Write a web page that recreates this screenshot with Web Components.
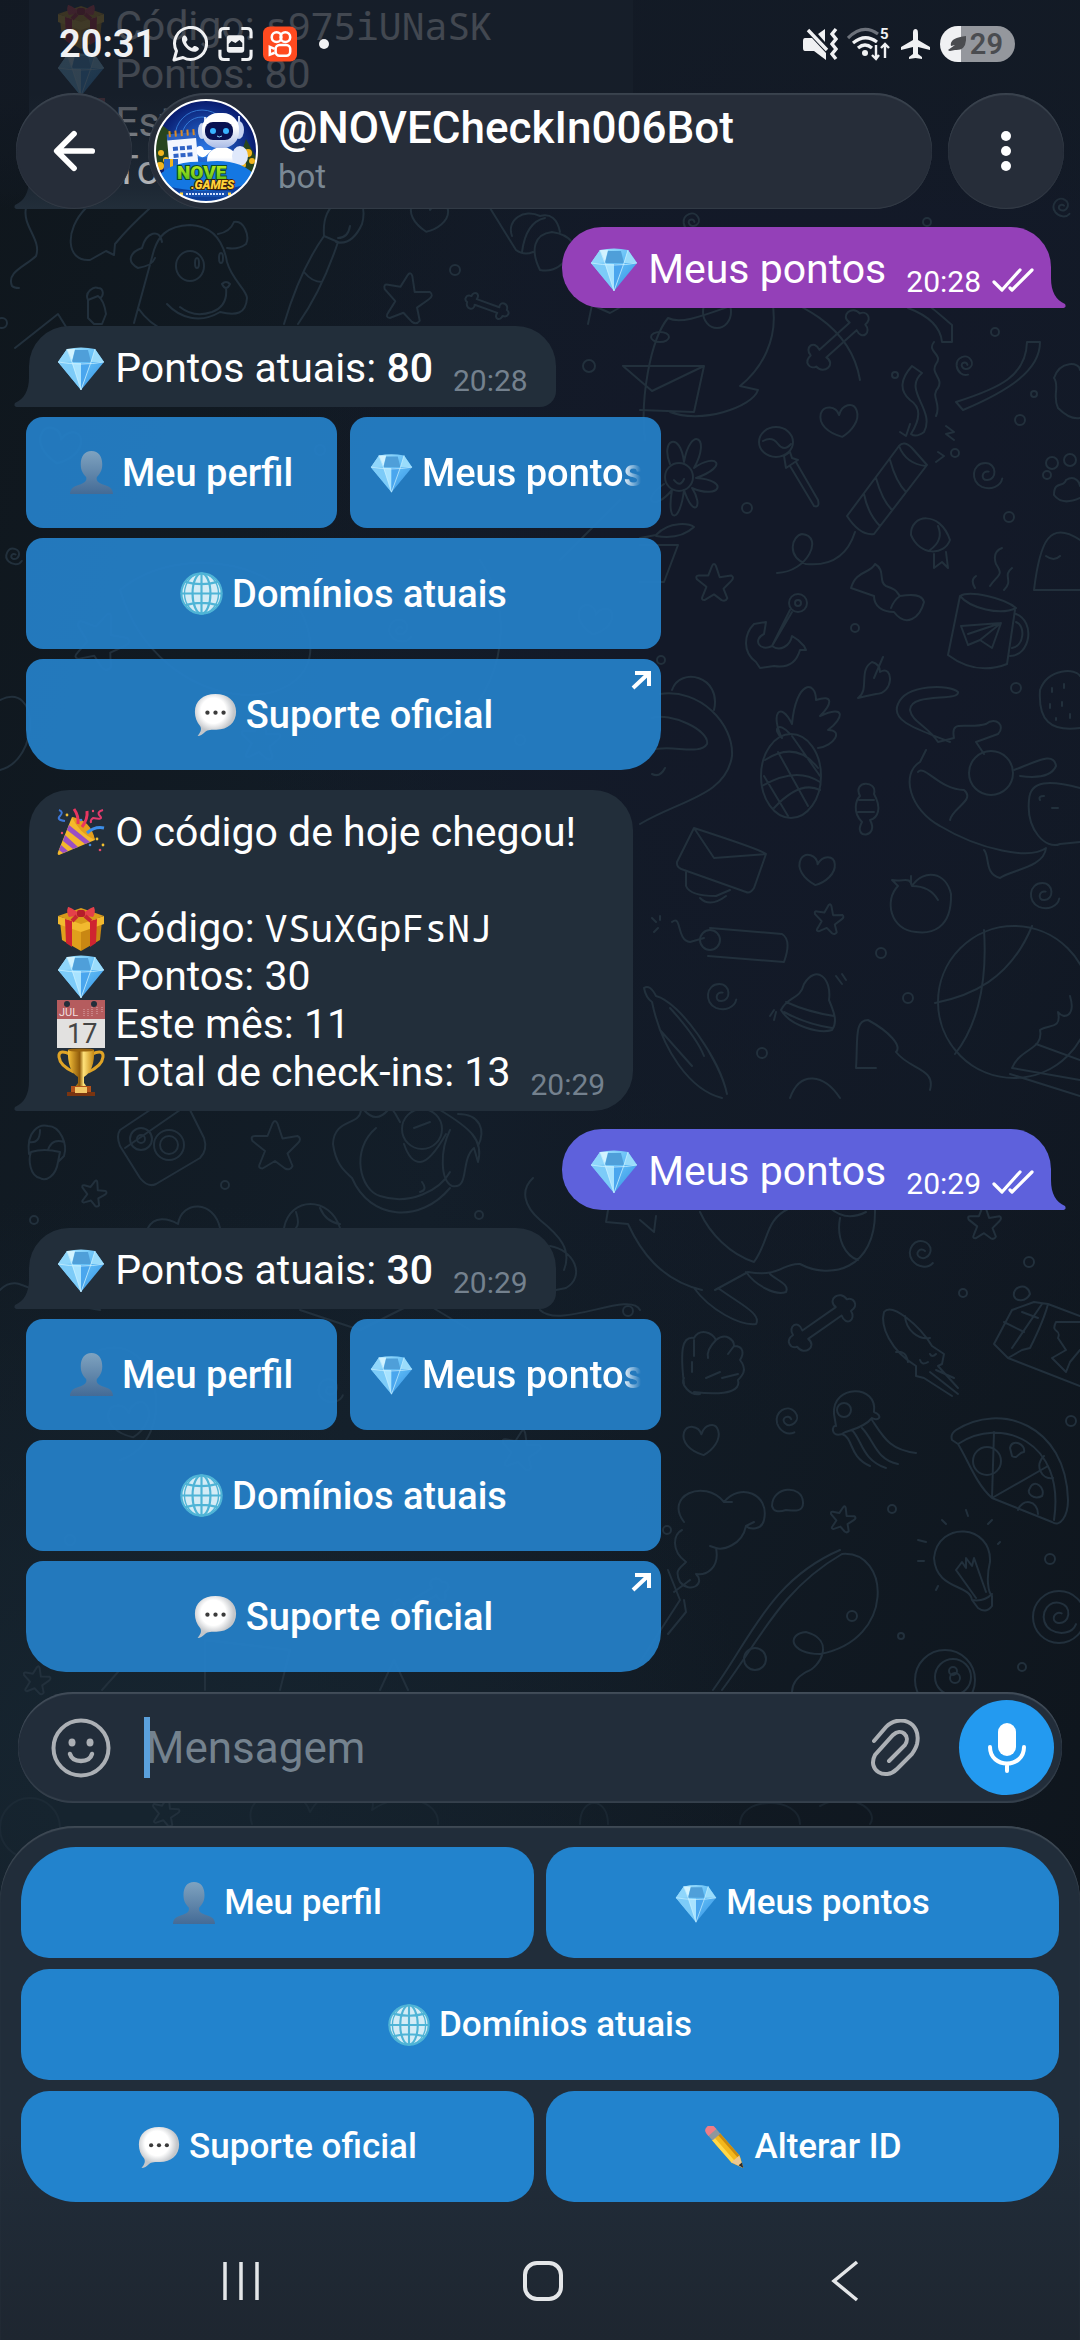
<!DOCTYPE html>
<html lang="pt-BR">
<head>
<meta charset="utf-8">
<meta name="viewport" content="width=device-width, initial-scale=1">
<title>@NOVECheckIn006Bot</title>
<style>
  body {
    margin: 0;
    background: #121924;
    color: #fff;
    font-family: Roboto, "Noto Sans", sans-serif;
  }
</style>
</head>
<body>
<chat-screen>
  <chat-wallpaper slot="wallpaper"></chat-wallpaper>
  <status-bar slot="top"></status-bar>
  <chat-header slot="top" name="@NOVECheckIn006Bot" status="bot"></chat-header>

  <chat-bubble time="20:28">
    <br>
    <emoji-icon name="gift"></emoji-icon> Código: <code>s975iUNaSK</code><br>
    <emoji-icon name="diamond"></emoji-icon> Pontos: 80<br>
    <emoji-icon name="calendar"></emoji-icon> Este mês: 10<br>
    <emoji-icon name="trophy"></emoji-icon> Total de check-ins: 12</chat-bubble>
  <chat-bubble out time="20:28"><emoji-icon name="diamond"></emoji-icon> Meus pontos</chat-bubble>
  <chat-bubble keyed time="20:28"><emoji-icon name="diamond"></emoji-icon> Pontos atuais: <b>80</b></chat-bubble>
  <inline-keyboard></inline-keyboard>

  <chat-bubble time="20:29">
    <emoji-icon name="party"></emoji-icon> O código de hoje chegou!<br>
    <br>
    <emoji-icon name="gift"></emoji-icon> Código: <code>VSuXGpFsNJ</code><br>
    <emoji-icon name="diamond"></emoji-icon> Pontos: 30<br>
    <emoji-icon name="calendar"></emoji-icon> Este mês: 11<br>
    <emoji-icon name="trophy"></emoji-icon> Total de check-ins: 13</chat-bubble>
  <chat-bubble out late time="20:29"><emoji-icon name="diamond"></emoji-icon> Meus pontos</chat-bubble>
  <chat-bubble keyed time="20:29"><emoji-icon name="diamond"></emoji-icon> Pontos atuais: <b>30</b></chat-bubble>
  <inline-keyboard></inline-keyboard>

  <message-composer slot="bottom"></message-composer>
  <reply-keyboard slot="bottom"></reply-keyboard>
</chat-screen>

<script>
const EMOJI = {
  diamond: `
    <linearGradient id="d" x1="0" y1="0" x2="1" y2="1"><stop offset="0" stop-color="#b6ecff"/><stop offset=".5" stop-color="#5fbcf6"/><stop offset="1" stop-color="#2f8be0"/></linearGradient>
    <path d="M10 5Q24 2 38 5L47 18 24 46 1 18Z" fill="url(#d)"/>
    <path d="M1 18 10 5 15 17Z" fill="#8fd6fb"/><path d="M10 5H18L15 17Z" fill="#d2f3ff"/>
    <path d="M18 6H31L34 18H15Z" fill="#4f9fd9"/><path d="M38 5 34 18 47 18Z" fill="#9adcfb"/>
    <path d="M1 18 15 19 24 46Z" fill="#7ccbf8"/><path d="M15 19H24V46Z" fill="#a8e3ff"/><path d="M24 19H34L24 46Z" fill="#4aa6ee"/>
    <path d="M1 18Q24 22 47 18M15 18 10 5M34 18 38 5M15 18 24 46 34 18" fill="none" stroke="#c9f0ff" stroke-width=".8"/>`,
  gift: `
    <path d="M3 17 24 24V47L5 36Z" fill="#e0a01c"/><path d="M45 17 24 24V47L43 36Z" fill="#c98712"/>
    <path d="M1 12 24 19 47 12V20L24 28 1 20Z" fill="#f2b92f"/><path d="M1 12 24 4 47 12 24 20Z" fill="#d99a1a"/>
    <path d="M8 15 15 17V43L9 39ZM40 15 33 17V43L39 39Z" fill="#cf2430"/>
    <path d="M22 9Q12 2 11 3Q9 8 12 13Q18 13 23 10ZM26 9Q36 2 37 3Q39 8 36 13Q30 13 25 10Z" fill="#e4404a"/>
    <rect x="20" y="6" width="8" height="7" rx="2" fill="#b51d2a"/><path d="M20 12 15 17M28 12 34 17" stroke="#c82632" stroke-width="4"/>`,
  party: `
    <path d="M15 9Q32 14 38 32L2 47Q0 47 1 44Z" fill="#f5b92c"/>
    <path d="M12 17 33 34 28 36 10 22ZM8 27 21 39 16 41 6 33ZM4 37 11 43 6 45 2 42Z" fill="#9a4fc4"/>
    <path d="M15 9Q34 12 38 32Q22 25 15 9Z" fill="#e39d1c"/>
    <path d="M21 16Q22 8 17 1M25 19Q31 11 30 3" stroke="#e8365f" stroke-width="3" fill="none"/>
    <path d="M30 25Q38 18 47 20" stroke="#3c8ee8" stroke-width="3" fill="none"/>
    <path d="M2 2Q7 4 3 8T8 13" stroke="#3c78d8" stroke-width="2" fill="none"/><path d="M46 2Q39 4 43 8T36 10Q33 12 34 15" stroke="#e23b6c" stroke-width="2" fill="none"/>
    <g fill="#f4c02f"><circle cx="10" cy="7" r="1.4"/><circle cx="40" cy="31" r="1.4"/><circle cx="46" cy="37" r="1.4"/></g>
    <g fill="#e8476a"><circle cx="36" cy="3" r="1.2"/><circle cx="43" cy="42" r="1.3"/><circle cx="5" cy="25" r="1.2"/></g>
    <g fill="#3f87e0"><circle cx="24" cy="12" r="1.3"/><circle cx="33" cy="37" r="1.3"/></g>`,
  calendar: `
    <rect width="48" height="48" fill="#e2e1e0"/><rect width="48" height="19" fill="#b55c5e"/>
    <circle cx="10" cy="4" r="3" fill="#222e3a"/><circle cx="37" cy="4" r="3" fill="#222e3a"/>
    <path d="M27 9V16M31 9V16M35 7V16M40 7V14M45 7V13" stroke="#c98486" stroke-width="2" stroke-dasharray="1 1"/>
    <text x="2" y="16" font-size="11" fill="#f2dede">JUL</text><text x="10" y="43" font-size="27" fill="#454545">17</text>`,
  trophy: `
    <linearGradient id="t"><stop offset="0" stop-color="#f7c23a"/><stop offset=".45" stop-color="#8f5a0a"/><stop offset=".6" stop-color="#ffe27a"/><stop offset="1" stop-color="#c48713"/></linearGradient>
    <path d="M13 6Q1 1 2 9Q3 18 17 24M35 6Q47 1 46 9Q45 18 31 24" fill="none" stroke="#e0a426" stroke-width="3"/>
    <path d="M11 2H37Q38 22 27 29V35L30 39H18L21 35V29Q10 22 11 2Z" fill="url(#t)"/><ellipse cx="24" cy="2" rx="13" ry="1.6" fill="#9a650e"/>
    <path d="M14 38H34V46H14Z" fill="#b3521a"/><path d="M10 44H38V48H10Z" fill="#7a3410"/><rect x="18" y="39" width="12" height="6" fill="#f3c767"/>`,
  user: `
    <linearGradient id="u" x2="0" y2="1"><stop offset="0" stop-color="#7fa3c0"/><stop offset="1" stop-color="#446b96"/></linearGradient>
    <path d="M24 0C32 0 36 6 36 15C36 22 33 26 30 29C29 33 31 35 36 37C43 39 48 41 48 48H0C0 41 5 39 12 37C17 35 19 33 18 29C15 26 12 22 12 15C12 6 16 0 24 0Z" fill="url(#u)"/>`,
  globe: `
    <circle cx="24" cy="24" r="23" fill="#d3ecf6"/>
    <g fill="none" stroke="#4fb4d6" stroke-width="2.4"><circle cx="24" cy="24" r="22.5"/><ellipse cx="24" cy="24" rx="10" ry="22.5"/><ellipse cx="24" cy="24" rx="19" ry="22.5" stroke-width="1.5"/><path d="M24 1V47M1 24H47M6 11Q24 16 42 11M6 37Q24 32 42 37"/></g>`,
  speech: `
    <radialGradient id="s" cx=".45" cy=".4"><stop offset=".6" stop-color="#fff"/><stop offset="1" stop-color="#c3c6ca"/></radialGradient>
    <path d="M24 1C38 1 47 9 47 21C47 33 38 41 25 41C20 41 15 41 13 43C10 46 7 48 4 48C7 44 9 41 7 37C3 33 1 27 1 21C1 9 10 1 24 1Z" fill="url(#s)"/>
    <g fill="#3b3b3b"><circle cx="15" cy="22" r="2.4"/><circle cx="24" cy="22" r="2.4"/><circle cx="33" cy="22" r="2.4"/></g>`,
  pencil: `
    <g transform="rotate(-41 24 24)"><path d="M18 8H30V43L24 56 18 43Z" fill="#f4b81c"/><path d="M18 8H22V43H18Z" fill="#ffd84a"/><path d="M27 8H30V43H27Z" fill="#c98a10"/>
    <path d="M18 42H30L24 56Z" fill="#ecc793"/><path d="M22 50H27L24 56Z" fill="#2c2c2c"/><path d="M18 1H30V9H18Z" fill="#8f979d"/><path d="M18-1Q18-7 24-7T30-1V2H18Z" fill="#ef7d86"/></g>`
};

class EmojiIcon extends HTMLElement {
  connectedCallback() {
    this.attachShadow({ mode: "open" });
    this.shadowRoot.innerHTML = `
      <style>
        :host {
          display: inline-block;
          width: var(--emoji-size, 48px);
          height: var(--emoji-size, 48px);
          flex: none;
          vertical-align: top;
        }
        svg { display: block; width: 100%; height: 100%; overflow: visible; }
      </style>
      <svg viewBox="0 0 48 48" aria-hidden="true">${EMOJI[this.getAttribute("name")]}</svg>
    `;
  }
}

// Small doodles repeated over the wallpaper: [symbol, x, y, scale, rotation]
const DOODLES = [
  ["star", 406, 298, 25, 10], ["star", 275, 1146, 25, 0], ["star", 93, 1193, 13, 15], ["star", 714, 583, 19, 0],
  ["star", 828, 919, 15, 8], ["star", 984, 1223, 17, 0], ["star", 842, 1519, 13, 12], ["star", 36, 1680, 14, 10], ["star", 165, 1812, 14, 12],
  ["heart", 429, 216, 20, 10], ["heart", 840, 421, 20, -8], ["heart", 817, 870, 19, 6], ["heart", 702, 1440, 19, -6],
  ["swirl", 987, 475, 17, 0], ["swirl", 965, 365, 11, 60], ["swirl", 1044, 895, 17, 0], ["swirl", 721, 996, 17, 0],
  ["swirl", 922, 1253, 16, 30], ["swirl", 788, 1420, 15, 50], ["swirl", 1059, 1617, 20, 10], ["swirl", 1062, 207, 11, 30],
  ["swirl", 14, 556, 10, 20], ["swirl", 692, 222, 11, 60],
  ["bone", 838, 340, 34, -42], ["bone", 822, 1323, 34, -35], ["bone", 487, 306, 20, 20],
  ["dot", 455, 270, 5], ["dot", 2, 323, 5], ["dot", 589, 366, 6], ["dot", 895, 375, 3], ["dot", 995, 332, 4], ["dot", 1034, 394, 3],
  ["dot", 1020, 420, 5], ["dot", 955, 453, 4], ["dot", 747, 508, 5], ["dot", 1009, 517, 5], ["dot", 855, 628, 4], ["dot", 1016, 688, 5],
  ["dot", 881, 953, 5], ["dot", 908, 998, 5], ["dot", 762, 1053, 5], ["dot", 225, 1185, 4], ["dot", 479, 1215, 4], ["dot", 34, 1220, 4],
  ["dot", 628, 1311, 5], ["dot", 1029, 1262, 5], ["dot", 963, 1293, 4], ["dot", 1071, 1421, 5], ["dot", 892, 1509, 4], ["dot", 667, 1530, 4],
  ["dot", 852, 1616, 5], ["dot", 1050, 1559, 5], ["dot", 901, 1636, 3], ["dot", 1022, 1667, 4], ["dot", 927, 222, 4], ["dot", 661, 660, 4],
  ["star", 100, 640, 28, 20], ["heart", 60, 446, 22, 10], ["dot", 320, 450, 5], ["swirl", 400, 630, 14, 20], ["heart", 595, 620, 18, 10],
  ["star", 260, 740, 20, 5], ["dot", 520, 740, 5], ["heart", 130, 1420, 22, -10], ["swirl", 330, 1390, 15, 10], ["star", 520, 1450, 20, 10],
  ["dot", 70, 1540, 5], ["bone", 420, 1600, 28, -30]
];

class ChatWallpaper extends HTMLElement {
  connectedCallback() {
    this.attachShadow({ mode: "open" });
    const uses = DOODLES.map(([id, x, y, s, r = 0]) =>
      `<use href="#${id}" transform="translate(${x} ${y}) rotate(${r}) scale(${s / 10})"/>`).join("");
    this.shadowRoot.innerHTML = `
      <style>
        :host {
          position: absolute;
          inset: 0;
          background:
            radial-gradient(ellipse 55% 40% at 75% 22%, #131928 30%, transparent),
            radial-gradient(ellipse 60% 25% at 10% 76%, #16242f 10%, transparent),
            linear-gradient(110deg, #0f161c 0%, #131e29 45%, #0e141b 100%);
        }
        svg { display: block; width: 100%; height: 100%; }
        use, path, circle, ellipse { vector-effect: non-scaling-stroke; }
      </style>
      <svg viewBox="0 0 1080 2340" preserveAspectRatio="xMidYMin slice" fill="none" stroke="#22303c" stroke-width="2" stroke-linecap="round" stroke-linejoin="round" aria-hidden="true">
        <defs>
          <path id="star" d="M-1-9Q0-11 1-9L3-3 9-4Q11-3 9-1L5 3 7 8Q6 10 4 9L0 6-5 9Q-7 9-6 7L-4 2-9-2Q-10-4-8-4L-3-4Z"/>
          <path id="heart" d="M0 8C-7 5-11 0-9-5C-7-9-1-8 0-3C2-8 8-9 9-4C10 1 5 6 0 8Z"/>
          <path id="swirl" d="M1-2C-3-3-4 3 0 3C6 3 6-7-1-7C-9-7-10 4-3 7C2 9 8 7 9 2"/>
          <path id="bone" d="M-6-1.5H6C5-5 10-5 10-1.500C12-1 12 2 9 2C9 5 5 5 6 1.500H-6C-5 5-10 5-10 1.500C-12 1-12-2-9-2C-9-5-5-5-6-1.500Z"/>
          <circle id="dot" r="10"/>
        </defs>
        ${uses}
        <!-- dog, brush, croissant and cactus under the header -->
        <path d="M134 323 154 250C158 238 165 226 190 225C216 226 224 245 227 262C232 280 247 290 247 298C246 314 236 316 220 312C200 324 180 318 167 304M180 307C190 315 200 316 212 312Q228 306 226 288M222 284Q226 280 230 284 226 292 222 284M162 242C160 228 146 232 142 248C130 252 126 262 138 268Q152 266 155 258M218 234Q230 232 234 222C244 220 250 236 246 244Q238 250 227 248M138 308Q150 325 165 330"/>
        <ellipse cx="190" cy="266" rx="14" ry="15"/><ellipse cx="197" cy="263" rx="2" ry="5"/><ellipse cx="221" cy="258" rx="2" ry="5"/>
        <path d="M284 324Q300 270 324 236L338 242Q322 290 298 324M304 272Q312 282 322 282M324 236C322 210 334 205 345 190C362 190 366 210 362 224Q352 246 336 242M350 226Q348 238 338 238"/>
        <path d="M490 208 516 250Q524 256 533 252M512 236C506 220 524 208 540 216Q556 212 560 232M522 252Q526 222 545 218M540 270C530 250 534 234 552 232Q566 234 572 242M540 270Q560 274 572 250"/>
        <path d="M26 208C22 226 42 240 36 256C26 266 6 272 12 286Q14 288 19 288M86 208C64 230 66 262 90 260L106 251 114 255 115 244Q128 228 150 208M88 300C84 292 94 286 98 288C104 288 104 296 100 298M88 300V318L94 324H102L106 314Q104 300 98 296ZM15 348 58 314 68 330"/>
        <path d="M588 324 592 305 610 313 628 303M645 440C640 400 650 340 668 318M668 318C690 330 750 290 772 300C780 340 760 370 740 386L758 390C752 408 700 424 670 412M623 366H704L694 412 640 410M623 366 652 391 704 366"/>
        <ellipse cx="717" cy="312" rx="14" ry="16"/><ellipse cx="660" cy="337" rx="9" ry="5"/>
        <path d="M750 285C790 300 850 320 860 380M905 290C930 304 940 315 952 325V342H942Q940 320 908 308M912 366 922 373C902 390 936 410 924 432Q916 438 911 434 926 410 910 400 894 386 912 366ZM934 342C926 352 944 354 936 364 930 374 944 378 938 388 930 396 942 404 936 416M1027 342H1040C1040 370 1010 390 963 410L956 402C1000 388 1026 376 1027 342Z"/>
        <!-- lollipop, daisy pot and party cracker -->
        <ellipse cx="776" cy="442" rx="17" ry="15"/><path d="M763 441Q772 436 778 444T791 444M784 456 790 452 792 458 798 460 792 464 786 468ZM790 466 814 506Q820 508 818 500L796 462"/>
        <ellipse cx="679" cy="477" rx="14" ry="14"/><path d="M670 464C660 440 680 430 684 462C690 426 712 436 694 468C716 452 730 466 696 478C730 480 720 500 692 488C704 506 694 520 684 490C680 524 666 524 672 490C654 512 640 500 664 484M674 480Q680 488 684 479M640 538 656 535C670 520 690 524 694 527Q680 540 656 536M640 545H678L664 582H640"/>
        <path d="M847 516 899 446Q904 440 912 448L927 465 874 534Q860 536 847 516ZM899 446Q906 464 926 466M864 494Q868 514 880 526M876 478Q882 500 892 510M890 460Q896 482 906 492M855 532C846 560 826 566 806 564C786 556 792 536 802 534C824 536 808 572 777 573"/>
        <path d="M900 432 906 436 910 424M946 426 954 432 946 434 954 440M936 462 944 456 938 452M1054 378C1060 360 1080 362 1080 370M1054 378C1060 386 1052 396 1058 408Q1070 420 1080 418"/>
        <path d="M1054 495C1054 480 1064 488 1066 480C1076 474 1080 484 1080 486M1054 495Q1062 506 1080 498"/><circle cx="1052" cy="463" r="6"/><circle cx="1070" cy="460" r="6"/><circle cx="1047" cy="475" r="4"/>
        <path d="M911 535C910 514 940 510 950 540C944 556 920 556 911 535ZM934 554 934 568 942 562 948 568 946 552M938 526Q944 540 930 550"/>
        <path d="M851 588C856 570 870 574 875 564C886 570 878 582 886 586C898 590 896 592 900 596C912 594 922 594 924 602C920 618 906 628 894 612C882 612 874 606 874 596ZM891 608Q894 600 900 596"/>
        <!-- anchor, mug and leaf -->
        <path d="M792 612 772 646C780 652 790 646 792 636L798 640 804 646 806 650H800C796 664 786 668 774 666L760 668 756 662C742 652 744 634 754 624L766 622 764 634C752 640 760 652 772 646L790 610"/><circle cx="798" cy="603" r="9"/><circle cx="798" cy="603" r="3"/>
        <path d="M960 596 948 655Q976 676 1007 664L1015 610M960 596C970 590 1004 598 1016 608C1000 616 970 608 960 596ZM1016 614C1036 622 1030 656 1010 656M1016 622C1026 626 1024 646 1012 648M961 626 1001 623 992 648 980 640 968 645ZM968 634 1001 623 980 640M975 588Q970 580 976 576M990 586C998 574 1004 576 996 564Q992 552 1002 548M1004 590C1014 580 1002 576 1012 568"/>
        <path d="M858 698C870 690 858 670 872 662Q880 664 880 672C894 664 894 694 876 694Q866 696 858 698M883 657 874 678M1034 590C1040 540 1050 520 1080 540M1034 590H1080M1046 556Q1054 562 1060 556"/>
        <path d="M1040 690C1048 668 1076 668 1080 676M1040 690C1038 720 1050 732 1080 728M1052 688V692M1064 684V688M1050 704V708M1062 702V706M1070 714V718M1056 718V720"/>
        <!-- pineapple, candy, panda and sleeping cat -->
        <ellipse cx="791" cy="776" rx="30" ry="42"/><path d="M782 738C770 714 780 700 792 724C796 680 816 680 816 700C834 694 832 704 820 716C846 704 844 718 828 730C844 730 834 746 818 748M782 738C772 730 778 720 790 734M765 760Q796 740 818 768M762 786Q796 766 820 782M774 808Q800 780 820 790M778 752 808 806M792 736 820 776M764 776 788 816"/>
        <path d="M860 796C852 780 878 780 874 794C882 808 878 818 870 820C880 838 852 840 862 822C852 812 856 800 860 796ZM859 800H874M858 812H874"/>
        <path d="M672 690C680 666 722 676 714 710M660 694C700 688 734 724 732 756C726 796 680 800 640 824M652 718C670 712 710 730 707 744C700 756 670 744 652 750M652 774Q660 778 665 768"/>
        <path d="M950 742C920 730 890 722 898 704C906 684 950 684 958 692C960 702 910 692 910 710C912 722 928 726 938 742L954 738C950 718 966 730 986 724C996 716 1006 726 998 734L976 742 984 754M926 750 920 762C900 774 910 810 940 826C980 850 1030 860 1046 848C1044 868 1010 870 1000 878C984 874 990 856 984 850M918 772C924 764 940 790 964 790C976 800 952 808 950 820M1029 800C1030 780 1050 780 1080 788M1029 800C1026 830 1046 850 1060 844L1080 842M1014 770C1040 760 1054 752 1056 766Q1050 780 1020 776M1040 800Q1038 796 1044 796M1052 808H1058"/>
        <ellipse cx="991" cy="773" rx="22" ry="22"/>
        <path d="M694 828 677 862Q676 868 684 870L746 892Q750 894 754 888L766 854Q762 850 694 828ZM694 828 714 858 766 854M686 872V886Q690 896 716 896L730 890M700 898Q710 908 726 896"/>
        <!-- dynamite, bell, peach, ball, boat -->
        <path d="M710 928 782 934Q792 940 784 962L708 956M672 922C682 914 676 940 690 942L704 938M652 918 656 922M660 916V920M654 932 658 928"/><circle cx="710" cy="940" r="10"/>
        <path d="M892 880C904 882 910 876 912 886C924 868 946 872 951 894C952 930 930 934 916 932C890 930 884 900 898 886ZM912 886Q930 886 938 900M911 876V884"/>
        <path d="M781 1010C788 996 800 1000 804 984C816 964 832 978 829 1000C834 1012 838 1022 832 1030C820 1034 790 1026 781 1010ZM786 1002Q808 1012 834 1016M784 1012Q806 1024 832 1028M836 976 842 984M842 974 846 980M770 1016 774 1010M774 1020 776 1012"/>
        <ellipse cx="1014" cy="1002" rx="76" ry="76"/><path d="M984 930C988 990 974 1030 955 1054M1032 926C1010 980 970 996 935 1003M1080 1060 1036 1044M1070 996C1076 1016 1064 1020 1058 1012 1062 1030 1048 1024 1040 1030 1044 1050 1020 1048 1012 1068L1080 1080M1010 1074 1080 1096"/>
        <path d="M644 988Q650 984 656 996C680 1002 720 1060 727 1094M644 988Q646 998 652 1002C662 1050 690 1090 722 1098M670 1008C690 1030 700 1046 704 1056M660 1030 692 1066M856 1068C858 1040 854 1020 868 1020C890 1032 902 1046 896 1052 910 1070 936 1068 930 1090M856 1068 876 1068M790 1098C800 1070 824 1074 840 1098"/>
        <!-- camera, acorn and mole -->
        <path d="M150 1110 120 1130Q116 1136 120 1146L140 1178Q148 1188 156 1184L200 1158Q208 1150 204 1138L190 1110M125 1148 180 1110"/><circle cx="141" cy="1139" r="11"/><circle cx="141" cy="1139" r="4"/><circle cx="169" cy="1145" r="15"/><circle cx="169" cy="1145" r="9"/>
        <path d="M29 1154C26 1130 40 1124 48 1126C60 1126 68 1144 64 1156L58 1162C56 1176 46 1182 40 1178C30 1176 28 1160 31 1152Q44 1148 60 1152L58 1162M29 1142Q40 1144 40 1130M48 1150Q52 1138 64 1142"/>
        <path d="M361 1110C360 1126 334 1118 333 1144C336 1166 346 1172 352 1178C370 1220 420 1224 450 1188M376 1128C350 1150 360 1190 380 1196C410 1206 440 1190 450 1172M400 1122Q396 1114 390 1106M450 1130C440 1150 440 1180 452 1186 470 1190 460 1160 474 1148L478 1162C484 1140 470 1128 440 1110M458 1114C480 1114 486 1130 478 1146M364 1110Q376 1124 388 1110"/>
        <circle cx="422" cy="1129" r="20"/><path d="M404 1144Q410 1162 420 1162T446 1134M414 1128 430 1122M422 1182Q428 1190 420 1192M148 1228C154 1216 168 1218 178 1224 182 1200 214 1200 220 1228M284 1228C290 1196 330 1196 340 1228M296 1212Q300 1224 296 1228M320 1208Q326 1222 340 1224"/>
        <!-- dolphin, shell, jellyfish and squid -->
        <path d="M533 1178C520 1190 524 1206 540 1220C560 1236 572 1250 564 1270M550 1246C574 1250 586 1276 566 1288L556 1290M608 1210 606 1222 628 1224C640 1250 660 1280 702 1290M700 1212C710 1234 730 1254 754 1262C770 1240 764 1220 790 1208M715 1290 748 1272C780 1278 784 1262 800 1264C830 1280 876 1270 875 1210M694 1288C710 1310 740 1326 756 1324C762 1314 740 1304 718 1288M746 1272C756 1286 776 1296 786 1292C790 1284 776 1280 770 1274M840 1218C836 1240 846 1256 858 1260M830 1208Q846 1222 866 1212M640 1220 654 1232 656 1216"/>
        <path d="M684 1384C680 1350 682 1336 694 1338C700 1328 712 1332 716 1340C726 1332 734 1340 734 1346C744 1346 744 1354 740 1360C748 1370 742 1376 738 1380C742 1396 710 1394 694 1392M694 1340V1356M716 1340Q706 1350 708 1358M734 1346 728 1354M692 1362V1372M706 1378 720 1372M722 1378 738 1374M684 1378C680 1384 690 1396 700 1394"/>
        <path d="M834 1414C832 1384 878 1384 874 1412C884 1416 878 1422 872 1418C862 1430 846 1430 842 1434C830 1438 832 1424 836 1426ZM842 1434C854 1438 848 1456 870 1466M852 1430C862 1440 862 1460 886 1468M862 1428C874 1440 876 1460 898 1464M872 1420C884 1438 890 1450 916 1453"/><circle cx="844" cy="1410" r="7"/>
        <path d="M916 1366C890 1350 880 1326 884 1312C892 1302 920 1326 932 1346L944 1354 942 1364 938 1366 958 1388M916 1366V1376L924 1378 952 1396M930 1372 958 1394M936 1370 954 1378M905 1316C906 1330 918 1340 930 1338M896 1352Q906 1350 908 1362M920 1360Q922 1366 928 1362M930 1354Q932 1358 936 1354"/>
        <!-- milk chocolate, pizza, cloud, bulb -->
        <path d="M1048 1304 1080 1316M1048 1304 1034 1302 1012 1310 994 1344 1008 1358 1080 1386M1048 1304C1044 1320 1034 1340 1030 1348L1022 1350 1008 1358M1042 1304 1012 1348M1004 1322 1024 1332M1022 1312 1038 1318M1014 1296C1012 1286 1028 1282 1030 1294 1026 1302 1016 1302 1014 1296ZM1080 1322H1056C1050 1334 1062 1328 1058 1338L1066 1350 1052 1358 1066 1372 1070 1362 1080 1350"/>
        <path d="M952 1440Q950 1434 956 1430C1000 1402 1066 1424 1068 1500C1068 1516 1060 1528 1052 1522L992 1498C976 1484 968 1460 958 1444ZM958 1444C1000 1416 1066 1440 1054 1520M994 1432 992 1498 1048 1466"/><circle cx="987" cy="1461" r="14"/><path d="M1044 1456C1034 1466 1042 1480 1053 1478M1018 1510C1022 1498 1038 1500 1038 1514M1010 1448C1012 1438 1026 1444 1024 1452 1018 1452 1018 1460 1012 1456ZM1030 1488C1034 1478 1046 1488 1042 1496 1034 1500 1026 1494 1030 1488Z"/>
        <path d="M684 1522C664 1496 704 1478 724 1502C740 1482 770 1494 764 1520C762 1530 750 1530 746 1526C742 1546 722 1550 716 1548C720 1568 706 1576 696 1574C706 1584 690 1594 680 1582C674 1570 680 1568 686 1562C670 1550 674 1534 682 1530M716 1548 710 1546M746 1526 754 1522M724 1502 732 1502M674 1592 690 1580M684 1600 686 1612 668 1634M668 1570 680 1600 640 1662M772 1506C772 1486 802 1484 803 1502C804 1514 790 1510 786 1510Q774 1514 772 1506"/>
        <path d="M972 1600C970 1584 936 1590 934 1558C938 1520 992 1524 990 1562C986 1578 988 1592 992 1596V1606Q986 1614 978 1608ZM972 1600Q984 1602 992 1594M956 1570 976 1598M956 1570 962 1562 966 1568 966 1558 972 1566 974 1558 986 1592M942 1520 946 1524M966 1510 968 1516M988 1524 992 1520M918 1540 926 1542M918 1561H924M998 1544 1000 1542M936 1590 938 1586"/>
        <path d="M713 1690C750 1640 770 1580 840 1550M722 1690C760 1640 780 1590 842 1554C890 1550 896 1640 820 1654C790 1654 786 1634 806 1632C836 1640 820 1668 806 1672Q792 1680 792 1692"/><circle cx="755" cy="1659" r="11"/>
        <circle cx="945" cy="1680" r="30"/><circle cx="953" cy="1677" r="18"/><circle cx="953" cy="1671" r="4"/><circle cx="955" cy="1678" r="5"/>
        <circle cx="1059" cy="1617" r="26"/>
        <!-- larger shapes behind the keyboards -->
        <path d="M0 700C40 680 40 760 0 770M120 590C180 540 300 560 310 640S160 720 120 590ZM480 560C520 620 500 700 440 740M560 560 620 500M0 1290C20 1270 30 1300 100 1310M100 1350C160 1330 180 1440 120 1460M300 1310 360 1330 420 1300 470 1330M540 1310C560 1330 630 1290 640 1310M102 1690 118 1672M205 1690V1640L290 1650 280 1690M380 1690 394 1660 408 1690"/>
        <g opacity=".5"><circle cx="30" cy="1828" r="30"/><path d="M252 1824C240 1790 300 1780 310 1812C330 1776 380 1784 372 1810C400 1790 440 1800 438 1824M580 1824C580 1796 608 1796 608 1824M740 1824C740 1796 800 1796 800 1824M820 1806C850 1790 880 1810 870 1824"/></g>
      </svg>
    `;
  }
}

class StatusBar extends HTMLElement {
  connectedCallback() {
    this.attachShadow({ mode: "open" });
    this.shadowRoot.innerHTML = `
      <style>
        :host {
          display: flex;
          align-items: center;
          justify-content: space-between;
          height: 88px;
          padding: 0 65px 0 59px;
          color: #f0f1f3;
        }
        div { display: flex; align-items: center; }
        .left { gap: 10px; }
        .right { gap: 9px; }
        time { font-size: 38px; line-height: 40px; font-weight: 600; margin-right: 6px; }
        .dot { width: 10px; height: 10px; margin-left: 12px; border-radius: 50%; background: #f0f1f3; }
        .battery {
          justify-content: flex-end;
          gap: 4px;
          width: 75px;
          height: 36px;
          padding-right: 12px;
          box-sizing: border-box;
          border-radius: 18px;
          background: linear-gradient(90deg, #f0f1f3 28%, #94979d 28%);
          color: #4a4c50;
          font-size: 29px;
          line-height: 36px;
          font-weight: 600;
        }
      </style>
      <div class="left">
        <time>20:31</time>
        <svg width="36" height="36" viewBox="0 0 36 36" fill="none" stroke="#f0f1f3" stroke-width="3"><path d="M2 34 4.500 25A16 16 0 1 1 11 31.500Z" stroke-linejoin="round"/><path d="M12 9.500C9 11 9 16 14 21.500S25 27 27 23C27 21 23 19.500 22 20L20 22C17 21 15 19 14 16L15.500 14C15.500 12 14 9 12 9.500Z" fill="#f0f1f3" stroke="none"/></svg>
        <svg width="35" height="36" viewBox="0 0 36 36"><path d="M2 12V6Q2 2 6 2H12M24 2H30Q34 2 34 6V12M34 24V30Q34 34 30 34H24M12 34H6Q2 34 2 30V24" fill="none" stroke="#f0f1f3" stroke-width="3.200"/><rect x="9" y="9" width="18" height="18" rx="3" fill="#f0f1f3"/><path d="M11 21V18L14 15 18 17 22 14 25 17V21Z" fill="#18202b"/></svg>
        <svg width="34" height="36" viewBox="0 0 35 36"><rect width="35" height="36" rx="7" fill="#ff4a1f"/><g fill="none" stroke="#fff" stroke-width="2.600"><circle cx="14" cy="11" r="5"/><circle cx="23" cy="11" r="5"/><rect x="13" y="19" width="15" height="11" rx="4"/><path d="M12 23 7 21V29L12 27"/></g></svg>
        <span class="dot"></span>
      </div>
      <div class="right">
        <svg width="35" height="36" viewBox="0 0 35 36"><path d="M2 12H9L23 27V34L11 25H2Q0 25 0 22V15Q0 12 2 12ZM15 8 22 3V16Z" fill="#f0f1f3"/><path d="M5 4 24 24M33 3 29 8 33 13 29 18 33 23 29 28 33 33" fill="none" stroke="#f0f1f3" stroke-width="3.400"/></svg>
        <svg width="44" height="36" viewBox="0 0 44 36"><g fill="none" stroke="#f0f1f3" stroke-width="3.200"><path d="M1 12Q16-3 31 8" stroke="#6c717a"/><path d="M6 17Q18 7 30 16M11 22Q18 16 25 22"/><path d="M29 19V33M25 29 29 33 32 29M38 32V18M34 22 38 18 42 22" stroke-width="2.400"/></g><circle cx="18" cy="27" r="3" fill="#f0f1f3"/><text x="33" y="13" font-size="15" font-weight="700" fill="#f0f1f3">5</text></svg>
        <svg width="31" height="32" viewBox="0 0 31 32"><path d="M15.500 1C18 1 18 4 18 6V12L30 19V22L18 19V26L22 29V31L15.500 30 9 31V29L13 26V19L1 22V19L13 12V6C13 4 13 1 15.500 1Z" fill="#f0f1f3"/></svg>
        <div class="battery">
          <svg width="19" height="16" viewBox="0 0 19 16"><path d="M19 0Q20 15 8 14L3 15Q2 15 1 14L8 9 4 10Q2 2 19 0Z" fill="#4a4c50"/></svg>
          29
        </div>
      </div>
    `;
  }
}

class BotAvatar extends HTMLElement {
  connectedCallback() {
    this.attachShadow({ mode: "open" });
    this.shadowRoot.innerHTML = `
      <style>
        :host { display: block; width: 104px; height: 104px; flex: none; }
        svg { display: block; font-family: Roboto, sans-serif; }
      </style>
      <svg width="104" height="104" viewBox="0 0 104 104" role="img" aria-label="NOVE GAMES">
        <defs>
          <clipPath id="round"><circle cx="52" cy="52" r="51"/></clipPath>
          <radialGradient id="sky"><stop offset="0" stop-color="#2c7bea"/><stop offset="1" stop-color="#07186a"/></radialGradient>
          <linearGradient id="lime" x2="0" y2="1"><stop offset="0" stop-color="#c9f51e"/><stop offset="1" stop-color="#4bb51a"/></linearGradient>
          <linearGradient id="shell" x2="0" y2="1"><stop offset=".4" stop-color="#fff"/><stop offset="1" stop-color="#a9bbe6"/></linearGradient>
        </defs>
        <g clip-path="url(#round)">
          <rect width="104" height="104" fill="url(#sky)"/>
          <g fill="none" stroke="#4aa4ff" opacity=".6"><circle cx="48" cy="38" r="20"/><circle cx="48" cy="38" r="27"/></g>
          <path d="M0 62V40L8 26 18 34V70ZM104 62 92 40 86 58V74H104Z" fill="#27451e"/>
          <g fill="#f2b51e"><circle cx="7" cy="54" r="3"/><circle cx="12" cy="61" r="3"/><circle cx="94" cy="54" r="4"/><circle cx="98" cy="62" r="3"/><circle cx="89" cy="66" r="3"/><circle cx="6" cy="67" r="4"/></g>
          <g transform="rotate(-5 30 50)"><rect x="14" y="36" width="29" height="31" rx="2" fill="#f3f7ff"/><path d="M14 34H43V40H14Z" fill="#2b5fc0"/><g fill="#2f63c6"><path d="M19 47H24V51H19ZM26 47H31V51H26ZM33 47H38V51H33ZM19 54H24V58H19ZM26 54H31V58H26ZM33 54H38V58H33Z"/></g><path d="M17 31V37M23 31V37M29 31V37M35 31V37M41 31V37" stroke="#d98b28" stroke-width="2"/></g>
          <path d="M10 60H24V72H10Z" fill="#2767c8"/><path d="M16 60H19V72H16Z" fill="#f2b51e"/>
          <ellipse cx="68" cy="61" rx="15" ry="13" fill="url(#shell)"/><ellipse cx="86" cy="57" rx="8" ry="10" fill="#dfe8fb"/><path d="M55 54Q48 62 43 55V48Q48 45 50 51L58 51Z" fill="#fff"/>
          <path d="M51 18V29M85 17V28" stroke="#cdd9f2" stroke-width="2"/>
          <ellipse cx="48" cy="32" rx="4" ry="8" fill="#c5d3f2"/><ellipse cx="85" cy="31" rx="5" ry="9" fill="#c5d3f2"/>
          <rect x="48" y="14" width="37" height="35" rx="16" fill="url(#shell)"/><rect x="51" y="23" width="28" height="18" rx="8" fill="#091252"/>
          <circle cx="59" cy="32" r="3" fill="#39b4ff"/><circle cx="72" cy="32" r="3" fill="#39b4ff"/><path d="M63 37Q65 39 68 37" stroke="#8cd9ff" fill="none"/>
          <path d="M0 84Q12 61 50 63Q88 58 104 80V104H0Z" fill="#1477e2"/><path d="M10 86Q50 98 94 85V104H10Z" fill="#0c3f9c"/>
          <text x="23" y="80" font-size="19" font-weight="900" fill="url(#lime)" stroke="#0c4a2a" stroke-width="2" paint-order="stroke">NOVE</text>
          <text x="37" y="90" font-size="12" font-weight="900" font-style="italic" fill="#ffd23a" stroke="#3c2308" stroke-width="2" paint-order="stroke">.GAMES</text>
          <rect x="24" y="92" width="55" height="6" rx="3" fill="#164fae"/><path d="M32 95H71" stroke="#cfe0ff" stroke-width="2" stroke-dasharray="2 1"/><path d="M26 95H29M74 95H77" stroke="#ffd23a" stroke-width="3"/>
        </g>
        <circle cx="52" cy="52" r="51" fill="none" stroke="#fff" stroke-width="2"/>
      </svg>
    `;
  }
}

class ChatHeader extends HTMLElement {
  connectedCallback() {
    this.attachShadow({ mode: "open" });
    this.shadowRoot.innerHTML = `
      <style>
        :host { display: flex; gap: 16px; padding: 5px 16px 0; }
        button, .title {
          height: 116px;
          box-sizing: border-box;
          border: none;
          border-radius: 58px;
          background: #262d39;
          box-shadow: inset 0 2px 1px #3a434e, inset 0 -1px 1px #343c47;
        }
        button { width: 116px; flex: none; padding: 0; display: grid; place-items: center; cursor: pointer; }
        .title { flex: 1; min-width: 0; display: flex; align-items: center; gap: 20px; padding: 0 6px; }
        h1 { margin: 0; font-size: 44px; line-height: 48px; font-weight: 500; }
        p { margin: 3px 0 0; font-size: 33px; line-height: 44px; color: #7a8894; }
      </style>
      <button aria-label="Voltar">
        <svg width="44" height="44" viewBox="0 0 46 46" fill="none" stroke="#fff" stroke-width="6" stroke-linecap="round" stroke-linejoin="round"><path d="M42 23H6M23 5 5 23 23 41"/></svg>
      </button>
      <div class="title">
        <bot-avatar></bot-avatar>
        <div>
          <h1>${this.getAttribute("name")}</h1>
          <p>${this.getAttribute("status")}</p>
        </div>
      </div>
      <button aria-label="Mais opções">
        <svg width="12" height="42" viewBox="0 0 12 42" fill="#fff"><circle cx="6" cy="6" r="5"/><circle cx="6" cy="21" r="5"/><circle cx="6" cy="36" r="5"/></svg>
      </button>
    `;
  }
}

class ChatBubble extends HTMLElement {
  connectedCallback() {
    const out = this.hasAttribute("out");
    this.attachShadow({ mode: "open" });
    this.shadowRoot.innerHTML = `
      <style>
        :host {
          --fill: #222e3a;
          position: relative;
          display: block;
          flex: none;
          align-self: flex-start;
          margin: 0 29px 18px;
          padding: 18px 28px 11px;
          border-radius: 40px 40px 40px 0;
          background: var(--fill);
          font-size: 41px;
          line-height: 48px;
        }
        :host([keyed]) { margin-bottom: 10px; border-bottom-right-radius: 16px; }
        :host([out]) {
          --fill: #9440b8;
          --meta: #fff;
          align-self: flex-end;
          padding-right: 17px;
          border-radius: 40px 40px 0 40px;
        }
        :host([late]) { --fill: #5e61dc; }
        ::slotted(b) { font-weight: 500; }
        ::slotted(code) { font-family: "Noto Sans Mono", "DejaVu Sans Mono", monospace; font-size: 38px; line-height: 40px; }
        .meta {
          display: inline-flex;
          align-items: baseline;
          gap: 11px;
          margin-left: 20px;
          vertical-align: -9px;
          color: var(--meta, #74818e);
          font-size: 30px;
          line-height: 31px;
        }
        .tail { position: absolute; bottom: 0; left: -15px; fill: var(--fill); }
        :host([out]) .tail { left: auto; right: -15px; transform: scaleX(-1); }
      </style>
      <slot></slot><span class="meta">
        <time>${this.getAttribute("time")}</time>
        ${out ? `<svg width="42" height="24" viewBox="0 0 42 24" fill="none" stroke="#fff" stroke-width="3.200" stroke-linecap="round" stroke-linejoin="round"><path d="M2 14 10 22 28 2M18 20 20 22 40 2"/></svg>` : ""}
      </span>
      <svg class="tail" width="16" height="30" viewBox="0 0 16 30"><path d="M15 0C15 14 10 22 1 26Q-1 30 4 30H16V0Z"/></svg>
    `;
  }
}

// A bot button. With href it becomes a link and gets the corner arrow.
class KeyButton extends HTMLElement {
  connectedCallback() {
    const href = this.getAttribute("href");
    const tag = href ? "a" : "button";
    this.attachShadow({ mode: "open" });
    this.shadowRoot.innerHTML = `
      <style>
        :host { display: block; flex: 1 1 0; min-width: 0; --emoji-size: var(--key-emoji); }
        button, a {
          position: relative;
          display: flex;
          align-items: center;
          justify-content: center;
          width: 100%;
          height: 111px;
          box-sizing: border-box;
          padding: 0 20px;
          border: none;
          border-radius: inherit;
          background: var(--key-fill);
          color: #fff;
          font: 500 var(--key-font) Roboto, "Noto Sans", sans-serif;
          text-decoration: none;
          white-space: nowrap;
          cursor: pointer;
        }
        .label { display: flex; align-items: center; gap: 9px; min-width: 0; overflow: hidden; }
        :host([clipped]) .label { mask-image: linear-gradient(90deg, #000 93%, transparent); }
        .arrow { position: absolute; top: 11px; right: 10px; }
      </style>
      <${tag} ${href ? `href="${href}"` : `type="button"`}>
        <span class="label"><emoji-icon name="${this.getAttribute("emoji")}"></emoji-icon><slot></slot></span>
        ${href ? `<svg class="arrow" width="20" height="20" viewBox="0 0 20 20" fill="none" stroke="#fff" stroke-width="4"><path d="M4 3H18V16M18 3 2 18"/></svg>` : ""}
      </${tag}>
    `;
  }
}

class InlineKeyboard extends HTMLElement {
  connectedCallback() {
    this.attachShadow({ mode: "open" });
    this.shadowRoot.innerHTML = `
      <style>
        :host {
          --key-fill: rgba(37, 129, 202, .92);
          --key-font: 38px;
          --key-emoji: 43px;
          display: flex;
          flex: none;
          flex-direction: column;
          gap: 10px;
          width: 635px;
          margin: 0 26px 20px;
        }
        .row { display: flex; gap: 13px; }
        key-button { border-radius: 17px; }
        .last key-button { border-radius: 17px 17px 40px 40px; }
      </style>
      <div class="row">
        <key-button emoji="user">Meu perfil</key-button>
        <key-button emoji="diamond" clipped>Meus pontos</key-button>
      </div>
      <div class="row"><key-button emoji="globe">Domínios atuais</key-button></div>
      <div class="row last"><key-button emoji="speech" href="#suporte">Suporte oficial</key-button></div>
    `;
  }
}

class MessageComposer extends HTMLElement {
  connectedCallback() {
    this.attachShadow({ mode: "open" });
    this.shadowRoot.innerHTML = `
      <style>
        :host {
          display: flex;
          align-items: center;
          height: 111px;
          margin: 0 18px 23px;
          padding: 0 8px 0 33px;
          box-sizing: border-box;
          border-radius: 55px;
          background: #222d3a;
          box-shadow: inset 0 2px 1px #424d59, inset 0 -2px 1px #35404c;
        }
        button { display: grid; place-items: center; padding: 0; border: none; background: none; cursor: pointer; }
        .field { position: relative; flex: 1; margin: 0 33px; }
        .caret { position: absolute; left: 0; top: 0; width: 6px; height: 61px; background: #5aa0dc; }
        input {
          display: block;
          width: 100%;
          height: 61px;
          box-sizing: border-box;
          padding: 0 0 0 2px;
          border: none;
          outline: none;
          background: none;
          color: #fff;
          font: 44px Roboto, "Noto Sans", sans-serif;
        }
        input::placeholder { color: #74828e; opacity: 1; }
        .mic { width: 95px; height: 95px; margin-left: 38px; border-radius: 50%; background: #239af0; }
      </style>
      <button aria-label="Emojis">
        <svg width="60" height="60" viewBox="0 0 60 60" fill="none" stroke="#acb0b5" stroke-width="4" stroke-linecap="round"><circle cx="30" cy="30" r="27.500"/><path d="M19 36Q21 43 30 43T41 36" stroke-width="4.500"/><ellipse cx="21" cy="24.500" rx="3.500" ry="4" fill="#acb0b5" stroke="none"/><ellipse cx="39" cy="24.500" rx="3.500" ry="4" fill="#acb0b5" stroke="none"/></svg>
      </button>
      <div class="field">
        <input type="text" placeholder="Mensagem" aria-label="Mensagem">
        <span class="caret"></span>
      </div>
      <button aria-label="Anexar">
        <svg width="50" height="58" viewBox="0 0 50 58" fill="none" stroke="#acb0b5" stroke-width="4" stroke-linecap="round"><path d="M3 22 15 8C27-5 51 2 46 25C45 29 43 32 41 35L26 50C14 62-4 51 4 36L22 16C30 8 40 17 34 26L18 42"/></svg>
      </button>
      <button class="mic" aria-label="Gravar áudio">
        <svg width="40" height="50" viewBox="0 0 40 50"><rect x="11" y="0" width="18" height="33" rx="9" fill="#fff"/><path d="M3 24C3 46 37 46 37 24M20 41V48" fill="none" stroke="#fff" stroke-width="4" stroke-linecap="round"/></svg>
      </button>
    `;
  }
}

class ReplyKeyboard extends HTMLElement {
  connectedCallback() {
    this.attachShadow({ mode: "open" });
    this.shadowRoot.innerHTML = `
      <style>
        :host {
          --key-fill: #2283cd;
          --key-font: 35px;
          --key-emoji: 42px;
          display: flex;
          flex-direction: column;
          gap: 11px;
          padding: 21px 21px 0;
          border-radius: 75px 75px 0 0;
          background: linear-gradient(#212d3a 60%, #1e2630);
          box-shadow: inset 0 2px 1px #3e4954;
        }
        .row { display: flex; gap: 12px; }
        key-button { border-radius: 28px; }
        .first :first-child { border-top-left-radius: 55px; }
        .first :last-child { border-top-right-radius: 55px; }
        .last :first-child { border-bottom-left-radius: 55px; }
        .last :last-child { border-bottom-right-radius: 55px; }
        nav { display: grid; grid-template-columns: repeat(3, 1fr); height: 119px; padding: 8px 63px 0 69px; }
        nav button { display: grid; place-items: center; padding: 0; border: none; background: none; cursor: pointer; }
      </style>
      <div class="row first">
        <key-button emoji="user">Meu perfil</key-button>
        <key-button emoji="diamond">Meus pontos</key-button>
      </div>
      <div class="row"><key-button emoji="globe">Domínios atuais</key-button></div>
      <div class="row last">
        <key-button emoji="speech">Suporte oficial</key-button>
        <key-button emoji="pencil">Alterar ID</key-button>
      </div>
      <nav>
        <button aria-label="Recentes"><svg width="38" height="42" viewBox="0 0 38 42" fill="none" stroke="#e4e6e8" stroke-width="3.500"><path d="M3 2V40M19 2V40M35 2V40"/></svg></button>
        <button aria-label="Início"><svg width="42" height="42" viewBox="0 0 42 42" fill="none" stroke="#e4e6e8" stroke-width="4"><rect x="3" y="3" width="36" height="36" rx="12"/></svg></button>
        <button aria-label="Voltar"><svg width="28" height="42" viewBox="0 0 28 42" fill="none" stroke="#e4e6e8" stroke-width="3.500"><path d="M26 2 3 21 26 40"/></svg></button>
      </nav>
    `;
  }
}

class ChatScreen extends HTMLElement {
  connectedCallback() {
    this.attachShadow({ mode: "open" });
    this.shadowRoot.innerHTML = `
      <style>
        :host {
          position: relative;
          display: flex;
          flex-direction: column;
          height: 100vh;
          overflow: hidden;
        }
        main {
          position: relative;
          flex: 1;
          min-height: 0;
          display: flex;
          flex-direction: column;
          justify-content: flex-end;
        }
        header {
          position: absolute;
          top: 0;
          left: 0;
          right: 0;
          background: linear-gradient(rgba(19, 26, 37, .8) 45%, rgba(19, 26, 37, .3) 90%, rgba(19, 26, 37, 0));
        }
        footer { position: relative; }
      </style>
      <slot name="wallpaper"></slot>
      <main><slot></slot></main>
      <header><slot name="top"></slot></header>
      <footer><slot name="bottom"></slot></footer>
    `;
  }
}

customElements.define("emoji-icon", EmojiIcon);
customElements.define("chat-wallpaper", ChatWallpaper);
customElements.define("status-bar", StatusBar);
customElements.define("bot-avatar", BotAvatar);
customElements.define("chat-header", ChatHeader);
customElements.define("key-button", KeyButton);
customElements.define("chat-bubble", ChatBubble);
customElements.define("inline-keyboard", InlineKeyboard);
customElements.define("message-composer", MessageComposer);
customElements.define("reply-keyboard", ReplyKeyboard);
customElements.define("chat-screen", ChatScreen);
</script>
</body>
</html>
